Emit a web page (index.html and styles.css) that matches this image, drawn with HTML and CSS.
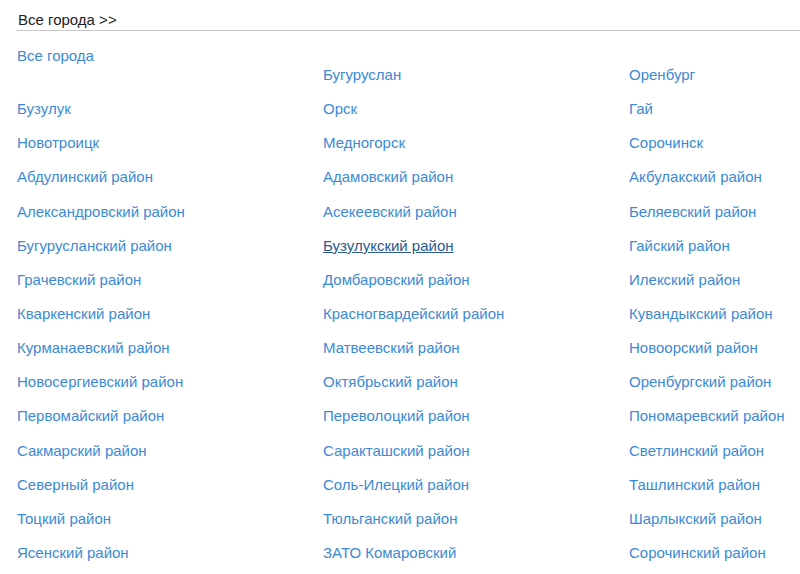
FILE: index.html
```html
<!DOCTYPE html>
<html lang="ru">
<head>
<meta charset="utf-8">
<title>Все города</title>
<link rel="stylesheet" href="styles.css">
</head>
<body>
<div class="page">
  <div class="crumb">Все города &gt;&gt;</div>
  <div class="all"><a class="link" href="#">Все города</a></div>
  <div class="grid">
    <span class="cell"></span>
    <a class="link" href="#">Бугуруслан</a>
    <a class="link" href="#">Оренбург</a>
    <a class="link" href="#">Бузулук</a>
    <a class="link" href="#">Орск</a>
    <a class="link" href="#">Гай</a>
    <a class="link" href="#">Новотроицк</a>
    <a class="link" href="#">Медногорск</a>
    <a class="link" href="#">Сорочинск</a>
    <a class="link" href="#">Абдулинский район</a>
    <a class="link" href="#">Адамовский район</a>
    <a class="link" href="#">Акбулакский район</a>
    <a class="link" href="#">Александровский район</a>
    <a class="link" href="#">Асекеевский район</a>
    <a class="link" href="#">Беляевский район</a>
    <a class="link" href="#">Бугурусланский район</a>
    <a class="link active" href="#">Бузулукский район</a>
    <a class="link" href="#">Гайский район</a>
    <a class="link" href="#">Грачевский район</a>
    <a class="link" href="#">Домбаровский район</a>
    <a class="link" href="#">Илекский район</a>
    <a class="link" href="#">Кваркенский район</a>
    <a class="link" href="#">Красногвардейский район</a>
    <a class="link" href="#">Кувандыкский район</a>
    <a class="link" href="#">Курманаевский район</a>
    <a class="link" href="#">Матвеевский район</a>
    <a class="link" href="#">Новоорский район</a>
    <a class="link" href="#">Новосергиевский район</a>
    <a class="link" href="#">Октябрьский район</a>
    <a class="link" href="#">Оренбургский район</a>
    <a class="link" href="#">Первомайский район</a>
    <a class="link" href="#">Переволоцкий район</a>
    <a class="link" href="#">Пономаревский район</a>
    <a class="link" href="#">Сакмарский район</a>
    <a class="link" href="#">Саракташский район</a>
    <a class="link" href="#">Светлинский район</a>
    <a class="link" href="#">Северный район</a>
    <a class="link" href="#">Соль-Илецкий район</a>
    <a class="link" href="#">Ташлинский район</a>
    <a class="link" href="#">Тоцкий район</a>
    <a class="link" href="#">Тюльганский район</a>
    <a class="link" href="#">Шарлыкский район</a>
    <a class="link" href="#">Ясенский район</a>
    <a class="link" href="#">ЗАТО Комаровский</a>
    <a class="link" href="#">Сорочинский район</a>
  </div>
</div>
</body>
</html>
```
FILE: styles.css
```css
html, body {
  margin: 0;
  padding: 0;
  background: #ffffff;
}
body {
  font-family: "Liberation Sans", Arial, sans-serif;
  font-size: 15px;
  line-height: 20px;
}
.page {
  padding-left: 17px;
}
.crumb {
  padding-top: 10px;
  padding-left: 1px;
  color: #222222;
  border-bottom: 1px solid #c8c8c8;
}
.all {
  margin-top: 15px;
  height: 19px;
}
.grid {
  display: grid;
  grid-template-columns: 306px 306px 171px;
  grid-auto-rows: 20px;
  row-gap: 14.15px;
}
.link {
  color: #3c8ad5;
  text-decoration: none;
  justify-self: start;
  white-space: nowrap;
}
.link.active {
  color: #2a5a8e;
  text-decoration: underline;
}
```
